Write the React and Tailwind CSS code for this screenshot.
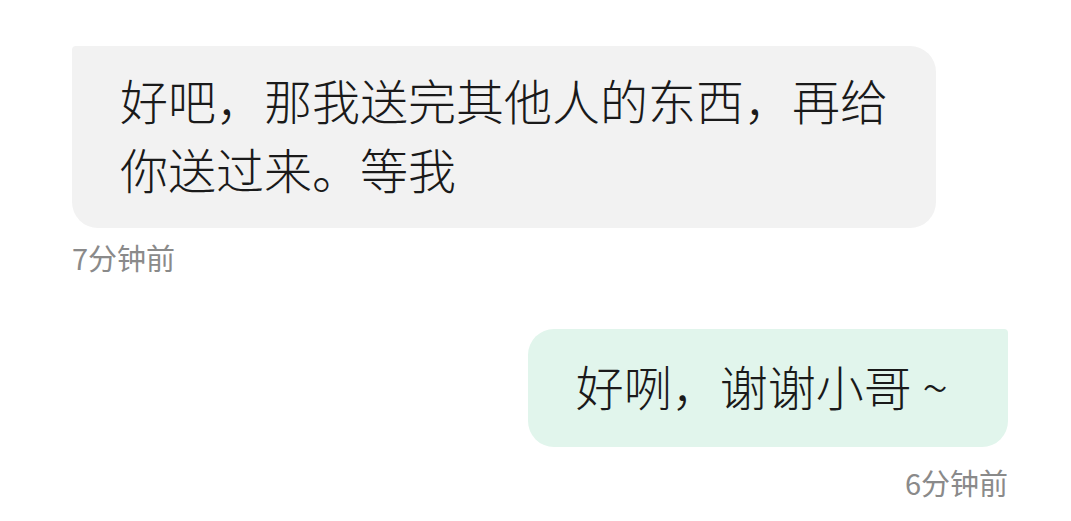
export default function App() {
  return (
    <main className="min-h-screen bg-white pl-[72px] pr-[63px] pt-[46px] font-['Noto_Sans_CJK_SC',sans-serif] font-light text-[#1a1a1a]">
      <div className="flex flex-col items-start">
        <div className="max-w-[864px] rounded-[26px] rounded-tl-[4px] bg-[#f2f2f2] px-[48px] pb-[25px] pt-[19px] text-[48px] leading-[69px]">
          好吧，那我送完其他人的东西，再给你送过来。等我
        </div>
        <span className="mt-[11px] text-[29px] font-normal leading-[36px] text-[#8a8a8a]">7分钟前</span>
      </div>

      <div className="mt-[54px] flex flex-col items-end">
        <div className="rounded-[26px] rounded-tr-[4px] bg-[#e1f5ec] pb-[27px] pl-[48px] pr-[60px] pt-[21px] text-[48px] leading-[70px]">
          好咧，谢谢小哥 ~
        </div>
        <span className="mt-[17px] text-[29px] font-normal leading-[36px] text-[#8a8a8a]">6分钟前</span>
      </div>
    </main>
  );
}
